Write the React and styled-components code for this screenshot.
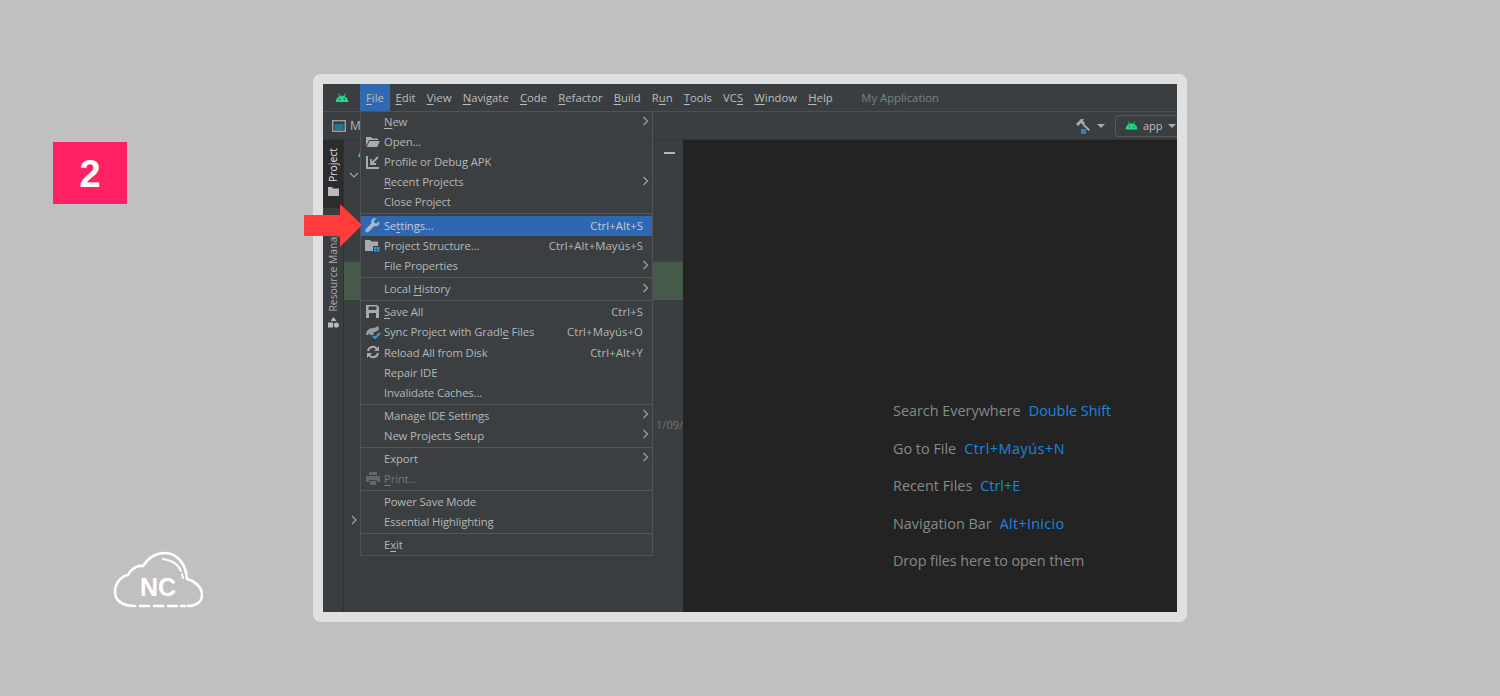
import React from "react";
import styled, { createGlobalStyle } from "styled-components";

const GlobalStyle = createGlobalStyle`
  html, body { margin: 0; padding: 0; background: #c0c0c0; }
  body { font-family: "Open Sans", "Liberation Sans", sans-serif; overflow: hidden; }
`;

const Page = styled.div`
  width: 1500px;
  height: 696px;
  display: flex;
  background: #c0c0c0;
`;

const Aside = styled.aside`
  width: 313px;
  flex: none;
  display: flex;
  flex-direction: column;
  padding: 142px 0 88px 53px;
  box-sizing: border-box;
`;

const StepBadge = styled.div`
  width: 74px;
  height: 62px;
  padding-top: 3px;
  box-sizing: border-box;
  background: #ff2164;
  color: #fff;
  font: 700 38px "Liberation Sans", sans-serif;
  display: flex;
  align-items: center;
  justify-content: center;
`;

const Logo = styled.svg`
  width: 90px;
  height: 57px;
  margin: auto 0 0 60px;
  display: block;
`;

const Frame = styled.div`
  position: relative;
  width: 854px;
  height: 528px;
  margin-top: 74px;
  border: 10px solid #e0e0e0;
  border-radius: 8px;
  background: #3a3e40;
  display: flex;
  flex-direction: column;
  color: #b4b7b9;
  font-size: 11.3px;
`;

const MenuBar = styled.div`
  height: 27px;
  flex: none;
  display: flex;
  align-items: stretch;
  border-bottom: 1px solid #4c5052;
`;

const BarLogo = styled.div`
  width: 37px;
  display: flex;
  align-items: center;
  justify-content: center;
`;

const BarItem = styled.div`
  padding: 0 ${(p) => (p.$active ? "6px" : "5.6px")};
  display: flex;
  align-items: center;
  background: ${(p) => (p.$active ? "#3069b0" : "transparent")};
  color: #babdbf;
`;

const AppTitle = styled.div`
  margin-left: 23px;
  display: flex;
  align-items: center;
  color: #7c8184;
`;

const Mnemonic = styled.span`
  text-decoration: underline;
  text-underline-offset: 2px;
`;

const Toolbar = styled.div`
  height: 27px;
  flex: none;
  display: flex;
  align-items: center;
  padding-left: 9px;
  border-bottom: 1px solid #323537;
  font-size: 12px;
`;

const Crumb = styled.span`
  margin-left: 4px;
  color: #b4b7b9;
`;

const ToolbarRight = styled.div`
  margin-left: auto;
  display: flex;
  align-items: center;
  gap: 6px;
`;

const Caret = styled.span`
  width: 0;
  height: 0;
  border-left: 4px solid transparent;
  border-right: 4px solid transparent;
  border-top: 4px solid #a9acae;
`;

const RunConfig = styled.div`
  width: 62px;
  height: 22px;
  margin-left: 4px;
  box-sizing: border-box;
  border: 1px solid #565a5c;
  border-right: none;
  border-radius: 4px 0 0 4px;
  display: flex;
  align-items: center;
  gap: 5px;
  padding-left: 9px;
  color: #babdbf;
  font-size: 11px;
`;

const Body = styled.div`
  flex: 1;
  display: flex;
  min-height: 0;
`;

const Stripe = styled.div`
  width: 20px;
  flex: none;
  border-right: 1px solid #2f3234;
  display: flex;
  flex-direction: column;
`;

const StripeTab = styled.div`
  height: ${(p) => p.$h}px;
  background: ${(p) => (p.$active ? "#2a2c2e" : "transparent")};
  color: ${(p) => (p.$active ? "#e4e4e4" : "#a9acae")};
  display: flex;
  flex-direction: column;
  align-items: center;
  justify-content: flex-end;
  gap: 5px;
  padding-bottom: ${(p) => p.$pb || 0}px;
  box-sizing: border-box;
  overflow: hidden;
  flex: none;
`;

const VerticalLabel = styled.span`
  writing-mode: vertical-rl;
  transform: rotate(180deg);
  white-space: nowrap;
  font-size: 10.4px;
`;

const Panel = styled.div`
  width: 339px;
  flex: none;
  display: flex;
  flex-direction: column;
  overflow: hidden;
`;

const PanelHead = styled.div`
  height: 26px;
  flex: none;
  display: flex;
  align-items: center;
  justify-content: space-between;
  padding: 0 8px 0 14px;
  box-sizing: border-box;
`;

const MinusBar = styled.span`
  width: 11px;
  height: 2px;
  background: #b4b7b9;
`;

const TreeChevron = styled.div`
  height: 18px;
  flex: none;
  padding-left: 5px;
  display: flex;
  align-items: center;
  margin-top: ${(p) => p.$mt || 0}px;
`;

const SelectedBand = styled.div`
  height: 38px;
  flex: none;
  margin-top: 78px;
  background: #465a4a;
`;

const DateText = styled.div`
  margin-top: 115px;
  height: 18px;
  flex: none;
  display: flex;
  align-items: center;
  justify-content: flex-end;
  color: #6f7477;
  font-size: 11px;
`;

const Editor = styled.div`
  flex: 1;
  background: #232323;
  padding: 252px 0 0 210px;
  font-size: 14.4px;
`;

const Hint = styled.div`
  height: 37.5px;
  display: flex;
  align-items: center;
  gap: 8px;
  color: #858a8d;
  white-space: nowrap;
  letter-spacing: ${(p) => p.$track || 0}px;
`;

const HintKey = styled.span`
  color: #1688e0;
  letter-spacing: ${(p) => p.$track || 0}px;
`;

const Dropdown = styled.div`
  position: absolute;
  left: 37px;
  top: 27px;
  width: 293px;
  box-sizing: border-box;
  background: #3b3f41;
  border: 1px solid #4f5355;
  letter-spacing: -0.12px;
  z-index: 2;
`;

const Row = styled.div`
  height: 20.05px;
  display: grid;
  grid-template-columns: 23px 1fr auto;
  align-items: center;
  box-sizing: border-box;
  padding: 0 9px 1px 0;
  white-space: nowrap;
  background: ${(p) => (p.$selected ? "#2f68b2" : "transparent")};
  color: ${(p) => (p.$disabled ? "#74787a" : p.$selected ? "#c6cbd2" : "#b4b7b9")};
  margin-top: ${(p) => (p.$selected ? 1 : 0)}px;
`;

const RowIcon = styled.span`
  display: flex;
  justify-content: center;
`;

const Shortcut = styled.span`
  color: inherit;
  letter-spacing: 0.1px;
`;

const SubArrow = styled.svg`
  justify-self: end;
  width: 7px;
  height: 10px;
  margin: -2px -6px 0 0;
`;

const Separator = styled.div`
  height: 3px;
  display: flex;
  align-items: center;
  &::before {
    content: "";
    flex: 1;
    height: 1px;
    background: #515557;
  }
`;

const Pointer = styled.svg`
  position: absolute;
  left: -19px;
  top: 120px;
  width: 60px;
  height: 44px;
  z-index: 3;
`;

const Android = ({ size = 14 }) => (
  <svg width={size} height={size * 0.7} viewBox="0 0 20 14">
    <path d="M1 13C1 8 5 4 10 4s9 4 9 9z" fill="#22d684" />
    <path d="M5 1l2 4M15 1l-2 4" stroke="#22d684" strokeWidth="1.4" />
    <circle cx="6.5" cy="9" r="1" fill="#3a3e40" />
    <circle cx="13.5" cy="9" r="1" fill="#3a3e40" />
  </svg>
);

const Chevron = ({ dir = "right" }) => (
  <svg width="10" height="10" viewBox="0 0 10 10">
    <path d={dir === "right" ? "M3 1l4 4-4 4" : "M1 3l4 4 4-4"} fill="none" stroke="#a0a4a6" strokeWidth="1.2" />
  </svg>
);

const icons = {
  open: (
    <svg width="14" height="12" viewBox="0 0 14 12">
      <path d="M0 1h5l1.5 1.5H12V4H3L0 10z" fill="#a8abad" />
      <path d="M3.5 5H14l-3 6H0.8z" fill="#a8abad" />
    </svg>
  ),
  profile: (
    <svg width="14" height="14" viewBox="0 0 14 14">
      <path d="M1 1v12h12" fill="none" stroke="#a8abad" strokeWidth="2" />
      <path d="M12 2L5 9M5 4v5h5" fill="none" stroke="#a8abad" strokeWidth="1.8" />
    </svg>
  ),
  wrench: (
    <svg width="15" height="15" viewBox="0 0 15 15">
      <path d="M14 3.2l-2.6 2.4-2-.5-.5-2L11.4.5C9.6-.2 7.5.3 6.6 1.9 6 3 6 4.2 6.5 5.2L.8 11c-.8.9-.8 2 0 2.8.8.8 2 .8 2.8 0l5.8-5.8c1.1.5 2.4.4 3.4-.3 1.4-1 1.8-3 1.2-4.5z" fill="#a9b6c6" />
    </svg>
  ),
  structure: (
    <svg width="15" height="13" viewBox="0 0 15 13">
      <path d="M0 1h5l1.5 1.5H13V7H8v5H0z" fill="#a8abad" />
      <path d="M9 8h2.5v2H9zM12 8h2.5v2H12zM9 10.6h2.5v2H9zM12 10.6h2.5v2H12z" fill="#2f9be0" />
    </svg>
  ),
  save: (
    <svg width="13" height="13" viewBox="0 0 13 13">
      <path fillRule="evenodd" d="M0 0h11l2 2v11H0zM2.5 1.5v3.5h8V1.5zM3 8v5h7V8z" fill="#a8abad" />
    </svg>
  ),
  sync: (
    <svg width="16" height="15" viewBox="0 0 16 15">
      <path d="M1 11c0-4 3-7 7-7 2 0 3-1 5-2l1 3c-1 2-3 3-5 3l-1 3H5l-.5-2-1.5 2z" fill="#9a9d9f" />
      <path d="M8 12l2 2 5-5" fill="none" stroke="#2f9be0" strokeWidth="2" />
    </svg>
  ),
  reload: (
    <svg width="14" height="14" viewBox="0 0 14 14">
      <path d="M2 6a5 5 0 0 1 9-2M12 8a5 5 0 0 1-9 2" fill="none" stroke="#a8abad" strokeWidth="2" />
      <path d="M13 1v5H8zM1 13V8h5z" fill="#a8abad" />
    </svg>
  ),
  print: (
    <svg width="14" height="13" viewBox="0 0 14 13">
      <path d="M3 0h8v3H3zM0 4h14v6h-3V8H3v2H0zM4 9h6v4H4z" fill="#626668" />
    </svg>
  ),
};

const Label = ({ text, mn }) => {
  if (mn === undefined) return <span>{text}</span>;
  return (
    <span>
      {text.slice(0, mn)}
      <Mnemonic>{text[mn]}</Mnemonic>
      {text.slice(mn + 1)}
    </span>
  );
};

const barItems = [
  ["Edit", 0], ["View", 0], ["Navigate", 0], ["Code", 0], ["Refactor", 0], ["Build", 0],
  ["Run", 1], ["Tools", 0], ["VCS", 2], ["Window", 0], ["Help", 0],
];

const menu = [
  { text: "New", mn: 0, sub: true },
  { text: "Open...", icon: "open" },
  { text: "Profile or Debug APK", icon: "profile" },
  { text: "Recent Projects", mn: 0, sub: true },
  { text: "Close Project" },
  "sep",
  { text: "Settings...", mn: 2, icon: "wrench", key: "Ctrl+Alt+S", selected: true },
  { text: "Project Structure...", icon: "structure", key: "Ctrl+Alt+Mayús+S" },
  { text: "File Properties", sub: true },
  "sep",
  { text: "Local History", mn: 6, sub: true },
  "sep",
  { text: "Save All", mn: 0, icon: "save", key: "Ctrl+S" },
  { text: "Sync Project with Gradle Files", mn: 23, icon: "sync", key: "Ctrl+Mayús+O" },
  { text: "Reload All from Disk", icon: "reload", key: "Ctrl+Alt+Y" },
  { text: "Repair IDE" },
  { text: "Invalidate Caches..." },
  "sep",
  { text: "Manage IDE Settings", sub: true },
  { text: "New Projects Setup", sub: true },
  "sep",
  { text: "Export", sub: true },
  { text: "Print...", mn: 0, icon: "print", disabled: true },
  "sep",
  { text: "Power Save Mode" },
  { text: "Essential Highlighting" },
  "sep",
  { text: "Exit", mn: 1 },
];

const hints = [
  { label: "Search Everywhere", shortcut: "Double Shift" },
  { label: "Go to File", shortcut: "Ctrl+Mayús+N", track: 0.5 },
  { label: "Recent Files", shortcut: "Ctrl+E" },
  { label: "Navigation Bar", shortcut: "Alt+Inicio", track: 0.3 },
  { label: "Drop files here to open them", rowTrack: -0.1 },
];

export default function App() {
  return (
    <Page>
      <GlobalStyle />
      <Aside>
        <StepBadge>2</StepBadge>
        <Logo viewBox="0 0 90 57">
          <g fill="none" stroke="#fff" strokeWidth="2.6" strokeLinecap="round">
            <path d="M22 55C10 55 2 50 2 41C2 31 9 25 15 24C18 18 24 14 30 15C35 7 43 2 52 2C64 2 73 13 74 28C82 30 89 36 89 44C89 51 83 55 75 55" />
            <path d="M27 55H36M41 55H50M55 55H64M68 55H72" />
            <path d="M50 8C58 9 65 13 68 20M69 23L70 27" strokeWidth="2" />
          </g>
          <text x="45" y="44.5" textAnchor="middle" fill="#fff" fontFamily="Liberation Sans, sans-serif" fontWeight="700" fontSize="25">NC</text>
        </Logo>
      </Aside>
      <Frame>
        <MenuBar>
          <BarLogo><Android /></BarLogo>
          <BarItem $active><Label text="File" mn={0} /></BarItem>
          {barItems.map(([t, mn]) => (
            <BarItem key={t}><Label text={t} mn={mn} /></BarItem>
          ))}
          <AppTitle>My Application</AppTitle>
        </MenuBar>
        <Toolbar>
          <svg width="14" height="12" viewBox="0 0 14 12">
            <rect x="0.7" y="0.7" width="12.6" height="10.6" fill="none" stroke="#9aa0a3" strokeWidth="1.4" />
            <rect x="2.5" y="4" width="9" height="6" fill="#1f7a96" />
          </svg>
          <Crumb>M</Crumb>
          <ToolbarRight>
            <svg width="15" height="16" viewBox="0 0 15 16">
              <path d="M0 6L5 1H8L7 3L9 5L7 7L5 5L2 8Z" fill="#a8abad" />
              <path d="M7.5 5.5L14 11.5L12.5 13L6.5 7Z" fill="#a8abad" />
              <rect x="5" y="11" width="5" height="5" fill="#1f86cf" />
            </svg>
            <Caret />
            <RunConfig>
              <Android size={13} />
              app
              <Caret />
            </RunConfig>
          </ToolbarRight>
        </Toolbar>
        <Body>
          <Stripe>
            <StripeTab $active $h={68} $pb={12}>
              <VerticalLabel>Project</VerticalLabel>
              <svg width="11" height="9" viewBox="0 0 11 9">
                <path d="M0 0h4l1 1.5h6V9H0z" fill="#b8bbbd" />
              </svg>
            </StripeTab>
            <StripeTab $h={125} $pb={5}>
              <VerticalLabel>Resource Manager</VerticalLabel>
              <svg width="11" height="11" viewBox="0 0 11 11">
                <path d="M5.5 0l3 4h-6zM0 5.5h5v5H0z" fill="#b8bbbd" />
                <circle cx="8.3" cy="8" r="2.6" fill="#b8bbbd" />
              </svg>
            </StripeTab>
          </Stripe>
          <Panel>
            <PanelHead>
              <svg width="5" height="8" viewBox="0 0 5 8">
                <path d="M0 8L3 0L5 2V8z" fill="#22d684" />
              </svg>
              <MinusBar />
            </PanelHead>
            <TreeChevron><Chevron dir="down" /></TreeChevron>
            <SelectedBand />
            <DateText>3 1/09/</DateText>
            <TreeChevron $mt={78}><Chevron /></TreeChevron>
          </Panel>
          <Editor>
            {hints.map((h) => (
              <Hint key={h.label} $track={h.rowTrack}>
                {h.label}
                {h.shortcut && <HintKey $track={h.track}>{h.shortcut}</HintKey>}
              </Hint>
            ))}
          </Editor>
        </Body>
        <Dropdown>
          {menu.map((item, i) =>
            item === "sep" ? (
              <Separator key={i} />
            ) : (
              <Row key={item.text} $selected={item.selected} $disabled={item.disabled}>
                <RowIcon>{item.icon && icons[item.icon]}</RowIcon>
                <Label text={item.text} mn={item.mn} />
                {item.key && <Shortcut>{item.key}</Shortcut>}
                {item.sub && (
                  <SubArrow viewBox="0 0 7 10">
                    <path d="M1.5 1l4 4-4 4" fill="none" stroke="#a0a4a6" strokeWidth="1.2" />
                  </SubArrow>
                )}
              </Row>
            )
          )}
        </Dropdown>
        <Pointer viewBox="0 0 60 44">
          <path d="M0 11h36V0l22 21-22 22V32H0z" fill="#ff3b3b" />
        </Pointer>
      </Frame>
    </Page>
  );
}
